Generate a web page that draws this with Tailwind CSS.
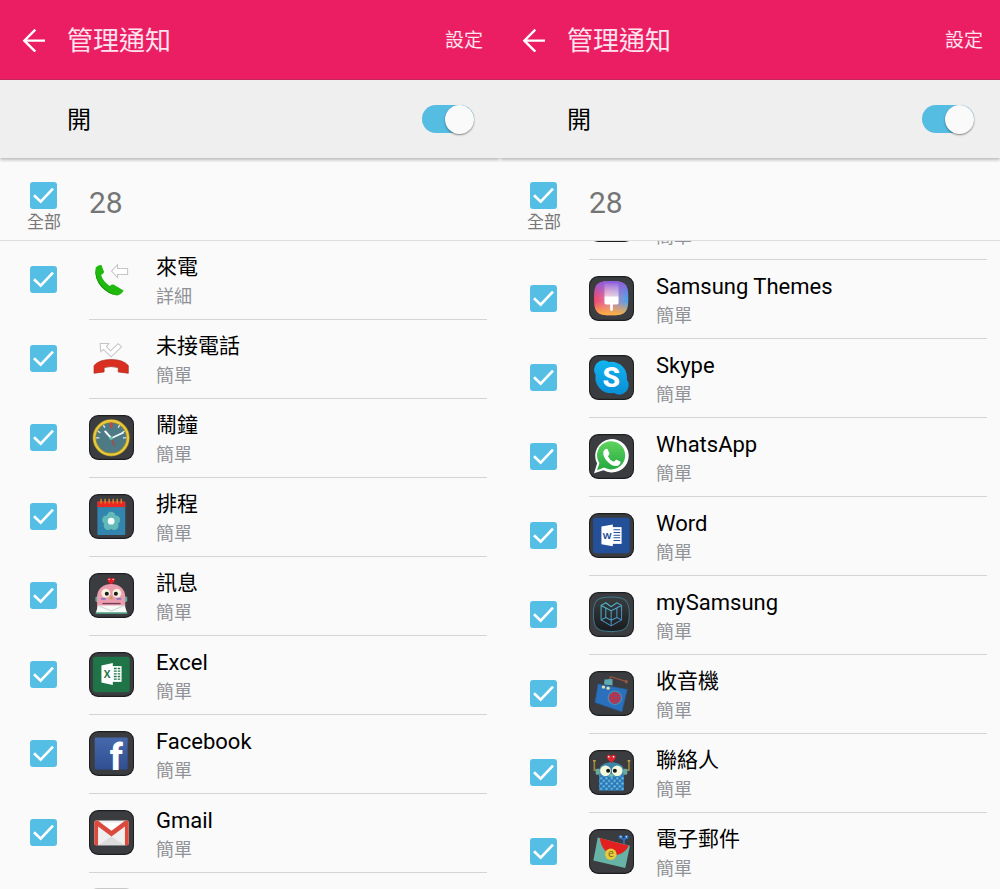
<!DOCTYPE html>
<html lang="zh-Hant">
<head>
<meta charset="utf-8">
<meta name="viewport" content="width=device-width, initial-scale=1">
<title>管理通知</title>
<script src="https://cdn.jsdelivr.net/npm/@tailwindcss/browser@4"></script>
</head>
<body class="bg-[#fafafa] font-['Roboto','Noto_Sans_CJK_TC',sans-serif] text-black">

<svg class="absolute size-0" aria-hidden="true">
  <defs>
    <linearGradient id="gTheme" x1="0" y1="0" x2="1" y2="0"><stop offset="0" stop-color="#f2456f"/><stop offset=".45" stop-color="#d87fa8"/><stop offset="1" stop-color="#4aa3ee"/></linearGradient>
    <linearGradient id="gThemeTop" x1="0" y1="0" x2="0" y2="1"><stop offset="0" stop-color="#8a5be0"/><stop offset=".5" stop-color="#8a5be0" stop-opacity="0"/><stop offset=".6" stop-color="#ffb13c" stop-opacity="0"/><stop offset="1" stop-color="#ffb13c"/></linearGradient>
    <linearGradient id="gBrush" x1="0" y1="0" x2="0" y2="1"><stop offset="0" stop-color="#fff" stop-opacity=".1"/><stop offset="1" stop-color="#fff" stop-opacity=".6"/></linearGradient>
    <linearGradient id="gSkype" x1="0" y1="16" x2="0" y2="118" gradientUnits="userSpaceOnUse"><stop offset="0" stop-color="#12b3f0"/><stop offset="1" stop-color="#0a8fd6"/></linearGradient>
    <linearGradient id="gWa" x1="0" y1="0" x2="0" y2="1"><stop offset="0" stop-color="#5fd35e"/><stop offset="1" stop-color="#23a83f"/></linearGradient>
    <linearGradient id="gFb" x1="0" y1="0" x2="0" y2="1"><stop offset="0" stop-color="#4868ad"/><stop offset="1" stop-color="#2f4f92"/></linearGradient>
    <linearGradient id="gMy" x1="36" y1="32" x2="97" y2="101" gradientUnits="userSpaceOnUse"><stop offset="0" stop-color="#4fc0cf"/><stop offset="1" stop-color="#4a7fc0"/></linearGradient>
    <linearGradient id="gMyBg" x1="0" y1="0" x2="0" y2="1"><stop offset="0" stop-color="#3a3e41"/><stop offset="1" stop-color="#191b1e"/></linearGradient>
    <pattern id="pDots" width="16" height="16" patternUnits="userSpaceOnUse"><rect width="16" height="16" fill="#2b76b8"/><circle cx="4" cy="4" r="3.4" fill="#6fc6de"/><circle cx="12" cy="12" r="3.4" fill="#6fc6de"/></pattern>
    <pattern id="pGrill" width="9" height="9" patternUnits="userSpaceOnUse"><rect width="9" height="9" fill="#d02c40"/><circle cx="4" cy="4" r="2.7" fill="#4a5b95"/></pattern>
    <symbol id="tile" viewBox="0 0 134 134"><rect width="134" height="134" rx="27" fill="#1c1e20"/><rect x="3" y="4" width="128" height="126" rx="24" fill="#3a3c3f"/></symbol>
  </defs>
</svg>

<template id="icons"><svg>
  <g id="blank"><use href="#tile"/></g>
  <g id="lighttile"><rect x="-1" y="-3" width="136" height="138" rx="27" fill="#c8c8c8"/><rect x="2" y="0" width="130" height="132" rx="25" fill="#f2f2f2"/></g>
  <g id="incoming">
    <path d="M20 31 Q29 23 37 24 L45 45 Q43 51 36 53 Q41 73 62 86 Q68 81 73 82 L103 100 Q98 111 84 115 Q58 111 38 90 Q14 64 20 31Z" fill="#21b80f"/>
    <path d="M20 34 Q15 64 38 90 Q58 111 84 115 Q58 106 42 90 Q19 66 20 34Z" fill="#149207"/>
    <path d="M67 42 L85 23 V34 H115 V52 H85 V61Z" fill="#fff" stroke="#c4c4c4" stroke-width="3"/>
  </g>
  <g id="missed">
    <path d="M33 22 H59 L52 32 L64 44 L87 23 L97 32 L66 62 L43 40 L35 47Z" fill="#fff" stroke="#c4c4c4" stroke-width="3"/>
    <path d="M15 111 V88 Q30 70 66 70 Q102 70 117 88 V111 L87 107 V94 Q66 88 45 94 V107Z" fill="#d92f20" stroke="#a8261a" stroke-width="2"/>
  </g>
  <g id="clock">
    <use href="#tile"/>
    <circle cx="66" cy="68" r="50" fill="#4d7a84" stroke="#9d8428" stroke-width="11"/>
    <circle cx="66" cy="68" r="50" fill="none" stroke="#e6c93c" stroke-width="7"/>
    <g stroke="#d9e8e8" stroke-width="4"><path d="M43 30l4 8M91 30l-4 8M26 48l8 5M106 48l-8 5M21 68h10M111 68h-10"/></g>
    <path d="M67 22v17" stroke="#e23a34" stroke-width="6"/>
    <path d="M47 47L66 69" stroke="#f4ffff" stroke-width="6"/><path d="M66 69L103 52" stroke="#f4ffff" stroke-width="5"/>
    <path d="M66 66L76 93" stroke="#b6463f" stroke-width="4"/><circle cx="66" cy="69" r="5" fill="#65cabb"/>
  </g>
  <g id="calendar">
    <use href="#tile"/>
    <rect x="25" y="22" width="83" height="100" rx="3" fill="#3185ae"/><path d="M25 22H108V39H25Z" fill="#ea2720"/>
    <g stroke="#d9912d" stroke-width="4"><path d="M36 14v14M48 14v14M60 14v14M72 14v14M84 14v14M96 14v14"/></g>
    <g fill="#63b9b7"><circle cx="66" cy="66" r="13"/><circle cx="80" cy="77" r="13"/><circle cx="75" cy="94" r="13"/><circle cx="57" cy="94" r="13"/><circle cx="52" cy="77" r="13"/></g>
    <circle cx="66" cy="81" r="10" fill="#f3ffff"/>
  </g>
  <g id="messages">
    <use href="#tile"/>
    <path d="M66 40V28" stroke="#c01f2d" stroke-width="4"/><path d="M66 34C50 24 54 12 62 14L66 17L70 14C78 12 82 24 66 34Z" fill="#e01f2b"/><circle cx="60" cy="19" r="2" fill="#fff"/><circle cx="72" cy="19" r="2" fill="#fff"/>
    <rect x="19" y="70" width="12" height="16" rx="4" fill="#58a89f"/><rect x="102" y="70" width="12" height="16" rx="4" fill="#58a89f"/>
    <path d="M24 117V72C24 20 108 20 108 72V117Z" fill="#eb9db0"/>
    <circle cx="50" cy="60" r="13" fill="#f6f2dc"/><circle cx="83" cy="60" r="13" fill="#f6f2dc"/><circle cx="53" cy="62" r="6" fill="#191919"/><circle cx="80" cy="62" r="6" fill="#191919"/>
    <path d="M66 66l6 12H60Z" fill="#cb9a4a"/><path d="M36 77h14M82 77h14" stroke="#8c74bd" stroke-width="5"/><path d="M40 91H94" stroke="#703e54" stroke-width="4"/>
    <path d="M27 97H106L114 120H20Z" fill="#f7faf6"/><path d="M27 97L66 113L106 97" fill="none" stroke="#c9d8d0" stroke-width="3"/><path d="M20 119H114" stroke="#4c9f82" stroke-width="4"/>
  </g>
  <g id="excel">
    <use href="#tile"/><rect x="12" y="14" width="109" height="106" rx="8" fill="#1f7547"/>
    <rect x="68" y="42" width="29" height="47" fill="#fff"/><path d="M74 49h19M74 57h19M74 65h19M74 73h19M74 81h19" stroke="#1f7547" stroke-width="4"/><path d="M84 43v45" stroke="#fff" stroke-width="3"/>
    <path d="M37 40L71 33V98L37 91Z" fill="#fff"/><text x="54" y="77" text-anchor="middle" font-family="Open Sans, sans-serif" font-size="30" font-weight="700" fill="#1f7547">X</text>
  </g>
  <g id="facebook">
    <use href="#tile"/><rect x="17" y="19" width="98" height="96" rx="3" fill="url(#gFb)"/>
    <text x="81" y="115" text-anchor="middle" font-family="Roboto, sans-serif" font-size="108" font-weight="800" fill="#fff">f</text>
  </g>
  <g id="gmail">
    <use href="#tile"/><rect x="16" y="31" width="102" height="74" rx="5" fill="#efefef"/><path d="M27 105L66 79L107 105Z" fill="#dcdcdc"/>
    <path d="M27 38H107L66 68Z" fill="#fff"/><path d="M16 105V37Q16 31 22 31H26L67 62L108 31H112Q118 31 118 37V105H107V49L67 79L27 49V105Z" fill="#dc4a3e"/>
  </g>
  <g id="themes">
    <use href="#tile"/><path d="M66 15C108 15 117 24 117 66C117 108 108 117 66 117C24 117 15 108 15 66C15 24 24 15 66 15Z" fill="url(#gTheme)"/>
    <path d="M66 15C108 15 117 24 117 66C117 108 108 117 66 117C24 117 15 108 15 66C15 24 24 15 66 15Z" fill="url(#gThemeTop)"/>
    <rect x="46" y="22" width="42" height="38" fill="url(#gBrush)"/><path d="M46 60H88V80Q88 85 83 85H71V100Q71 104 67 104Q63 104 63 100V85H51Q46 85 46 80Z" fill="#fff"/>
  </g>
  <g id="skype">
    <use href="#tile"/><circle cx="43" cy="44" r="28" fill="url(#gSkype)"/><circle cx="90" cy="90" r="28" fill="url(#gSkype)"/><circle cx="66" cy="67" r="47" fill="url(#gSkype)"/>
    <text x="66" y="96" text-anchor="middle" font-family="Roboto, sans-serif" font-size="84" font-weight="800" fill="#fff">S</text>
  </g>
  <g id="whatsapp">
    <use href="#tile"/><path d="M15 117L24 88A50 50 0 1 1 43 108Z" fill="#fff"/><path d="M24 108L31 87A42 42 0 1 1 45 100Z" fill="url(#gWa)"/>
    <path d="M43 52Q48 41 55 45L61 58Q60 63 56 66Q62 78 74 83L81 76L94 83Q94 92 84 95Q70 98 54 81Q40 66 43 52Z" fill="#fff"/>
  </g>
  <g id="word">
    <use href="#tile"/><rect x="12" y="14" width="109" height="106" rx="8" fill="#24509a"/>
    <rect x="68" y="42" width="29" height="50" fill="#fff"/><path d="M73 50h20M73 58h20M73 66h20M73 74h20M73 82h20" stroke="#24509a" stroke-width="3"/>
    <path d="M37 40L71 34V99L37 93Z" fill="#fff"/><text x="54" y="77" text-anchor="middle" font-family="Open Sans, sans-serif" font-size="27" font-weight="700" fill="#24509a">W</text>
  </g>
  <g id="mysamsung">
    <use href="#tile"/><path d="M66 15C108 15 120 24 120 66C120 108 108 118 66 118C24 118 13 108 13 66C13 24 24 15 66 15Z" fill="url(#gMyBg)" stroke="#3d7788" stroke-width="3"/>
    <g fill="none" stroke="url(#gMy)" stroke-width="3" stroke-linejoin="round"><path d="M36 40L50 32L66 44L83 32L97 40V83L66 101L36 83Z"/><path d="M36 40L66 56L97 40M66 56V101M50 49V76L36 83M83 49V76L97 83M50 76L66 84L83 76"/></g>
  </g>
  <g id="radio">
    <use href="#tile"/><path d="M57 34L64 17L110 31" fill="none" stroke="#975440" stroke-width="4"/><circle cx="111" cy="32" r="5" fill="#8f5b43"/>
    <path d="M46 25L70 24V43L45 40Z" fill="#5fa9b3"/><path d="M27 39L114 55L98 121L18 94Z" fill="#2a70bd" stroke="#255e9c" stroke-width="2"/>
    <circle cx="43" cy="48" r="5" fill="#e1e2a8"/><circle cx="57" cy="51" r="5" fill="#e1e2a8"/>
    <circle cx="77" cy="80" r="20" fill="url(#pGrill)" stroke="#438fb9" stroke-width="4"/>
  </g>
  <g id="contacts">
    <use href="#tile"/><path d="M16 31V60H32M119 31V60H103" fill="none" stroke="#9c843d" stroke-width="5"/><path d="M12 32h8M115 32h8" stroke="#c2a447" stroke-width="5"/>
    <path d="M30 118V62C30 28 104 28 104 62V118Z" fill="#3d86a8"/><path d="M30 76H104V121H30Z" fill="url(#pDots)"/>
    <path d="M67 37C48 25 51 12 61 14L66 18L71 14C81 12 85 25 67 37Z" fill="#e02430"/><circle cx="59" cy="20" r="2.5" fill="#fff"/><circle cx="73" cy="20" r="2.5" fill="#fff"/>
    <circle cx="49" cy="62" r="16" fill="#f5f9dd"/><circle cx="84" cy="62" r="16" fill="#f5f9dd"/><circle cx="57" cy="62" r="6" fill="#171717"/><circle cx="77" cy="62" r="6" fill="#171717"/><path d="M67 84l-7-12h14Z" fill="#79c5a2"/>
    <rect x="20" y="56" width="12" height="18" rx="4" fill="#68aaa0"/><rect x="102" y="56" width="12" height="18" rx="4" fill="#68aaa0"/>
  </g>
  <g id="email">
    <use href="#tile"/><path d="M104 44V32L94 25M104 32L113 24" stroke="#2e6cb8" stroke-width="6" fill="none"/><circle cx="94" cy="24" r="6" fill="#2c75cc"/><circle cx="112" cy="24" r="6" fill="#2c75cc"/><circle cx="95" cy="23" r="2" fill="#fff"/><circle cx="111" cy="23" r="2" fill="#fff"/>
    <path d="M26 25L122 50L108 116L13 94Z" fill="#67b3a5"/><path d="M32 27L119 50Q105 76 74 79Q38 70 32 27Z" fill="#e22020"/>
    <circle cx="65" cy="75" r="17" fill="#e8cb3d"/><text x="65" y="84" text-anchor="middle" font-family="Open Sans, sans-serif" font-size="31" fill="#72631c">e</text>
  </g>
</svg></template>

<main class="grid h-screen grid-cols-2 overflow-hidden" id="screens"></main>

<script>
  const art = (id) => document.getElementById('icons').content.getElementById(id).innerHTML;
  const brief = '簡單';
  const latin = 'text-[22px] leading-7';
  const han = 'text-[21px] leading-[26px]';
  const screens = [
    { listClass: '', rows: [
      ['incoming', '來電', '詳細'], ['missed', '未接電話', brief], ['clock', '鬧鐘', brief], ['calendar', '排程', brief],
      ['messages', '訊息', brief], ['excel', 'Excel', brief], ['facebook', 'Facebook', brief], ['gmail', 'Gmail', brief], ['lighttile', '', '']] },
    { listClass: '-mt-[60px]', rows: [
      ['blank', '', brief], ['themes', 'Samsung Themes', brief], ['skype', 'Skype', brief], ['whatsapp', 'WhatsApp', brief],
      ['word', 'Word', brief], ['mysamsung', 'mySamsung', brief], ['radio', '收音機', brief], ['contacts', '聯絡人', brief], ['email', '電子郵件', brief]] },
  ];

  const checkbox = (id) => `
    <span class="grid size-[27px] shrink-0">
      <input id="${id}" type="checkbox" checked class="peer col-start-1 row-start-1 size-[27px] appearance-none rounded-[3px] bg-[#d0d0d0] checked:bg-[#55bee4]">
      <svg class="pointer-events-none col-start-1 row-start-1 hidden size-[27px] peer-checked:block" viewBox="0 0 81 81" fill="none" stroke="#fff" stroke-width="8"><path d="M12 40L32 59L69 20"/></svg>
    </span>`;

  const row = (s, [icon, name, mode], i) => `
    <li class="flex items-start pl-[30px]">
      <div class="w-[59px] shrink-0 pt-[25px]">${checkbox(`s${s}r${i}`)}</div>
      <label for="s${s}r${i}" class="mr-[13px] flex h-[79px] flex-1 items-start gap-[22px] border-b border-[#d4d4d4]">
        <svg class="mt-4 size-[45px] shrink-0 overflow-visible" viewBox="0 0 134 134" aria-hidden="true">${art(icon)}</svg>
        <span class="flex flex-col pt-[13px]">
          <span class="min-h-7 ${/^[A-Za-z]/.test(name) ? latin : han}">${name}</span>
          <span class="text-[18px] leading-[30px] text-[#909297]">${mode}</span>
        </span>
      </label>
    </li>`;

  document.getElementById('screens').innerHTML = screens.map((sc, s) => `
    <section class="flex min-h-0 min-w-0 flex-col">
      <header class="relative z-20 flex h-20 shrink-0 items-center border-b border-[#c2265a] bg-[#eb1e63] pr-[17px] pl-[22px] text-[#ffe3ee]">
        <button type="button" aria-label="返回" class="mr-[21px] size-6 shrink-0">
          <svg class="size-6" viewBox="0 0 72 72" fill="none" stroke="#fff" stroke-width="7"><path d="M69 38H7M40 5L7 38L40 71"/></svg>
        </button>
        <h1 class="flex-1 pt-0.5 text-[26px] leading-9">管理通知</h1>
        <button type="button" class="pt-0.5 text-[19px] leading-7">設定</button>
      </header>
      <div class="relative z-10 flex h-[78px] shrink-0 items-center justify-between bg-[#efefef] pr-[26px] pl-[67px] shadow-[0_2px_3px_rgba(0,0,0,0.25)] [clip-path:inset(0_0_-8px_0)]">
        <label for="power${s}" class="pt-0.5 text-[24px] leading-9">開</label>
        <input id="power${s}" type="checkbox" role="switch" checked class="flex h-7 w-[52px] appearance-none items-center justify-start rounded-full bg-[#bdbdbd] before:size-[29px] before:shrink-0 before:rounded-full before:bg-[#fafafa] before:shadow-[0_1px_2px_rgba(0,0,0,0.45)] before:content-[''] checked:justify-end checked:bg-[#55bce2]">
      </div>
      <div class="relative z-[5] flex h-[83px] shrink-0 items-start border-b border-[#dedede] bg-[#fafafa] pl-[27px]">
        <div class="flex w-[62px] flex-col items-start pt-6">
          <div class="pl-[3px]">${checkbox(`all${s}`)}</div>
          <label for="all${s}" class="pt-px text-[17px] leading-6 text-[#777]">全部</label>
        </div>
        <p class="pt-[27px] text-[30px] leading-9 text-[#757575]">28</p>
      </div>
      <ul class="${sc.listClass}">${sc.rows.map((r, i) => row(s, r, i)).join('')}</ul>
    </section>`).join('');
</script>
</body>
</html>
